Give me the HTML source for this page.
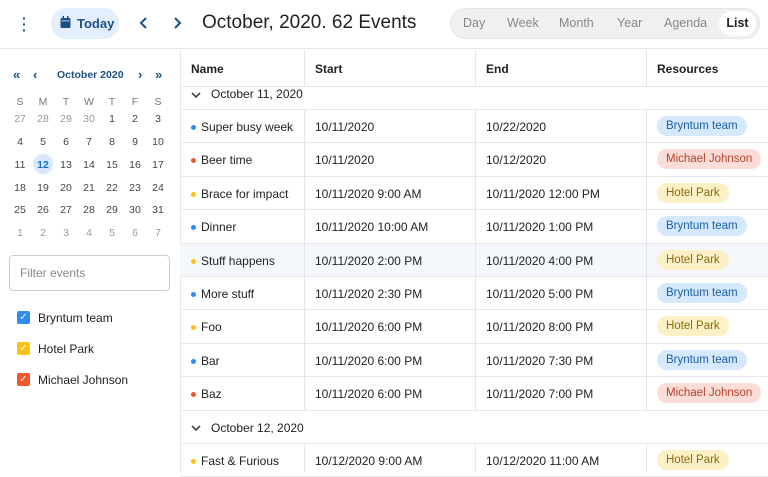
<!DOCTYPE html>
<html><head><meta charset="utf-8"><style>
*{box-sizing:border-box;margin:0;padding:0}
body{width:768px;height:473px;overflow:hidden;background:#fff;font-family:"Liberation Sans",sans-serif;color:#222;position:relative;font-size:12px}
.abs{position:absolute}
.hdr{left:0;top:0;width:768px;height:49px;border-bottom:1px solid #e6e6e6}
.today{left:51px;top:8px;width:68px;height:31px;border-radius:16px;background:#e3effc;color:#1c4f86;font-size:13px;font-weight:bold;line-height:31px;padding-left:26px}
.title{left:202px;top:12px;font-size:19px;color:#222}
.seg{left:450px;top:8px;width:310px;height:31px;border-radius:16px;background:#f0f0f0;border:1px solid #e6e6e6}
.seg span{position:absolute;top:7px;font-size:12.5px;color:#888}
.seg .act{background:#fff;border-radius:13px;top:2px;height:25px;line-height:25px;width:37px;text-align:center;color:#222;font-weight:bold}
.cal span{position:absolute;width:22px;text-align:center;font-size:10.5px;color:#444;transform:translateX(-11px)}
.filter{left:9px;top:255px;width:161px;height:36px;border:1px solid #ccc;border-radius:4px;color:#888;padding:10px;font-size:12px}
.cb{left:17px;width:13px;height:13px;border-radius:2px;color:#fff;font-size:10px;line-height:13px;text-align:center}
.cbl{left:38px;font-size:12px;color:#222}
.vl{top:50px;width:1px;background:#e6e6e6}
.row{left:180px;width:588px;border-bottom:1px solid #e8e8e8;height:33.4px}
.cell{position:absolute;font-size:12px;top:10px}
.dot{position:absolute;left:11px;top:15px;width:5px;height:5px;border-radius:50%}
.tag{position:absolute;left:477px;top:6px;height:20px;line-height:20px;border-radius:10px;padding:0 9px;font-size:11.5px}
.b{background:#d6e8fb;color:#1b5fa6}.r{background:#fbddd8;color:#b3402c}.y{background:#fcf0c6;color:#8a6d12}
</style></head><body>
<div class="abs hdr"></div>
<div class="abs" style="left:22px;top:15px;font-weight:bold;color:#1c4f86;font-size:14px;line-height:6px;width:4px">·<br>·<br>·</div>
<div class="abs today">Today</div>
<svg class="abs" style="left:60px;top:16px" width="11" height="12" viewBox="0 0 11 12"><rect x="0.5" y="2" width="10" height="10" rx="1.5" fill="#1c4f86"/><rect x="2.5" y="0" width="1.5" height="3" fill="#1c4f86"/><rect x="7" y="0" width="1.5" height="3" fill="#1c4f86"/><rect x="1.5" y="4.5" width="8" height="0.8" fill="#e3effc"/></svg>
<svg class="abs" style="left:139px;top:17px" width="10" height="12"><path d="M7 1L2 6l5 5" stroke="#1c4f86" stroke-width="2" fill="none"/></svg>
<svg class="abs" style="left:172px;top:17px" width="10" height="12"><path d="M3 1l5 5-5 5" stroke="#1c4f86" stroke-width="2" fill="none"/></svg>
<div class="abs title">October, 2020. 62 Events</div>
<div class="abs seg"><span style="left:12px">Day</span><span style="left:56px">Week</span><span style="left:108px">Month</span><span style="left:166px">Year</span><span style="left:213px">Agenda</span><span class="act" style="left:268px">List</span></div>

<div class="abs" style="left:13px;top:67px;color:#1c4f86;font-weight:bold;font-size:13px">«</div>
<div class="abs" style="left:33px;top:67px;color:#1c4f86;font-weight:bold;font-size:13px">‹</div>
<div class="abs" style="left:57px;top:69px;color:#1c4f86;font-weight:bold;font-size:10.5px">October 2020</div>
<div class="abs" style="left:138px;top:67px;color:#1c4f86;font-weight:bold;font-size:13px">›</div>
<div class="abs" style="left:155px;top:67px;color:#1c4f86;font-weight:bold;font-size:13px">»</div>
<div class="abs" style="left:33px;top:154px;width:20px;height:20px;border-radius:50%;background:#d6e8fb"></div>
<div class="abs cal" style="left:0;top:0">
<span style="left:20px;top:96px;color:#777">S</span><span style="left:43px;top:96px;color:#777">M</span><span style="left:66px;top:96px;color:#777">T</span><span style="left:89px;top:96px;color:#777">W</span><span style="left:112px;top:96px;color:#777">T</span><span style="left:135px;top:96px;color:#777">F</span><span style="left:158px;top:96px;color:#777">S</span>
<span style="left:20px;top:113px;color:#999">27</span><span style="left:43px;top:113px;color:#999">28</span><span style="left:66px;top:113px;color:#999">29</span><span style="left:89px;top:113px;color:#999">30</span><span style="left:112px;top:113px">1</span><span style="left:135px;top:113px">2</span><span style="left:158px;top:113px">3</span>
<span style="left:20px;top:136px">4</span><span style="left:43px;top:136px">5</span><span style="left:66px;top:136px">6</span><span style="left:89px;top:136px">7</span><span style="left:112px;top:136px">8</span><span style="left:135px;top:136px">9</span><span style="left:158px;top:136px">10</span>
<span style="left:20px;top:159px">11</span><span style="left:43px;top:159px;color:#1b6fd1;font-weight:bold">12</span><span style="left:66px;top:159px">13</span><span style="left:89px;top:159px">14</span><span style="left:112px;top:159px">15</span><span style="left:135px;top:159px">16</span><span style="left:158px;top:159px">17</span>
<span style="left:20px;top:182px">18</span><span style="left:43px;top:182px">19</span><span style="left:66px;top:182px">20</span><span style="left:89px;top:182px">21</span><span style="left:112px;top:182px">22</span><span style="left:135px;top:182px">23</span><span style="left:158px;top:182px">24</span>
<span style="left:20px;top:204px">25</span><span style="left:43px;top:204px">26</span><span style="left:66px;top:204px">27</span><span style="left:89px;top:204px">28</span><span style="left:112px;top:204px">29</span><span style="left:135px;top:204px">30</span><span style="left:158px;top:204px">31</span>
<span style="left:20px;top:227px;color:#999">1</span><span style="left:43px;top:227px;color:#999">2</span><span style="left:66px;top:227px;color:#999">3</span><span style="left:89px;top:227px;color:#999">4</span><span style="left:112px;top:227px;color:#999">5</span><span style="left:135px;top:227px;color:#999">6</span><span style="left:158px;top:227px;color:#999">7</span>
</div>
<div class="abs filter">Filter events</div>
<div class="abs cb" style="top:311px;background:#2f8df0">✓</div><div class="abs cbl" style="top:311px">Bryntum team</div>
<div class="abs cb" style="top:342px;background:#fbc21a">✓</div><div class="abs cbl" style="top:342px">Hotel Park</div>
<div class="abs cb" style="top:373px;background:#f2572c">✓</div><div class="abs cbl" style="top:373px">Michael Johnson</div>

<div class="abs" style="left:180px;top:50px;width:588px;height:37px;border-bottom:1px solid #e6e6e6"></div>
<div class="abs vl" style="left:180px;height:423px"></div>
<div class="abs vl" style="left:304px;height:37px"></div><div class="abs vl" style="left:475px;height:37px"></div><div class="abs vl" style="left:646px;height:37px"></div>
<div class="abs" style="left:191px;top:62px;font-weight:bold;font-size:12px">Name</div>
<div class="abs" style="left:315px;top:62px;font-weight:bold;font-size:12px">Start</div>
<div class="abs" style="left:486px;top:62px;font-weight:bold;font-size:12px">End</div>
<div class="abs" style="left:657px;top:62px;font-weight:bold;font-size:12px">Resources</div>

<div class="abs row" style="top:87px;height:23px"><svg class="abs" style="left:11px;top:4px" width="10" height="8"><path d="M1 2l4 4 4-4" stroke="#444" stroke-width="1.6" fill="none"/></svg><div class="cell" style="left:31px;top:0">October 11, 2020</div></div>

<div class="abs row" style="top:110px"><span class="dot" style="background:#2f8df0"></span><span class="cell" style="left:21px">Super busy week</span><span class="cell" style="left:135px">10/11/2020</span><span class="cell" style="left:306px">10/22/2020</span><span class="tag b">Bryntum team</span></div>
<div class="abs row" style="top:143.4px"><span class="dot" style="background:#f2572c"></span><span class="cell" style="left:21px">Beer time</span><span class="cell" style="left:135px">10/11/2020</span><span class="cell" style="left:306px">10/12/2020</span><span class="tag r">Michael Johnson</span></div>
<div class="abs row" style="top:176.8px"><span class="dot" style="background:#fbc21a"></span><span class="cell" style="left:21px">Brace for impact</span><span class="cell" style="left:135px">10/11/2020 9:00 AM</span><span class="cell" style="left:306px">10/11/2020 12:00 PM</span><span class="tag y">Hotel Park</span></div>
<div class="abs row" style="top:210.2px"><span class="dot" style="background:#2f8df0"></span><span class="cell" style="left:21px">Dinner</span><span class="cell" style="left:135px">10/11/2020 10:00 AM</span><span class="cell" style="left:306px">10/11/2020 1:00 PM</span><span class="tag b">Bryntum team</span></div>
<div class="abs row" style="top:243.6px;background:#f4f8fd"><span class="dot" style="background:#fbc21a"></span><span class="cell" style="left:21px">Stuff happens</span><span class="cell" style="left:135px">10/11/2020 2:00 PM</span><span class="cell" style="left:306px">10/11/2020 4:00 PM</span><span class="tag y">Hotel Park</span></div>
<div class="abs row" style="top:277px"><span class="dot" style="background:#2f8df0"></span><span class="cell" style="left:21px">More stuff</span><span class="cell" style="left:135px">10/11/2020 2:30 PM</span><span class="cell" style="left:306px">10/11/2020 5:00 PM</span><span class="tag b">Bryntum team</span></div>
<div class="abs row" style="top:310.4px"><span class="dot" style="background:#fbc21a"></span><span class="cell" style="left:21px">Foo</span><span class="cell" style="left:135px">10/11/2020 6:00 PM</span><span class="cell" style="left:306px">10/11/2020 8:00 PM</span><span class="tag y">Hotel Park</span></div>
<div class="abs row" style="top:343.8px"><span class="dot" style="background:#2f8df0"></span><span class="cell" style="left:21px">Bar</span><span class="cell" style="left:135px">10/11/2020 6:00 PM</span><span class="cell" style="left:306px">10/11/2020 7:30 PM</span><span class="tag b">Bryntum team</span></div>
<div class="abs row" style="top:377.2px"><span class="dot" style="background:#f2572c"></span><span class="cell" style="left:21px">Baz</span><span class="cell" style="left:135px">10/11/2020 6:00 PM</span><span class="cell" style="left:306px">10/11/2020 7:00 PM</span><span class="tag r">Michael Johnson</span></div>
<div class="abs row" style="top:410.6px"><svg class="abs" style="left:11px;top:13px" width="10" height="8"><path d="M1 2l4 4 4-4" stroke="#444" stroke-width="1.6" fill="none"/></svg><span class="cell" style="left:31px">October 12, 2020</span></div>
<div class="abs row" style="top:444px"><span class="dot" style="background:#fbc21a"></span><span class="cell" style="left:21px">Fast &amp; Furious</span><span class="cell" style="left:135px">10/12/2020 9:00 AM</span><span class="cell" style="left:306px">10/12/2020 11:00 AM</span><span class="tag y">Hotel Park</span></div>
<div class="abs vl" style="left:304px;top:110px;height:300px"></div><div class="abs vl" style="left:475px;top:110px;height:300px"></div><div class="abs vl" style="left:646px;top:110px;height:300px"></div>
<div class="abs vl" style="left:304px;top:444px;height:29px"></div><div class="abs vl" style="left:475px;top:444px;height:29px"></div><div class="abs vl" style="left:646px;top:444px;height:29px"></div>
</body></html>
